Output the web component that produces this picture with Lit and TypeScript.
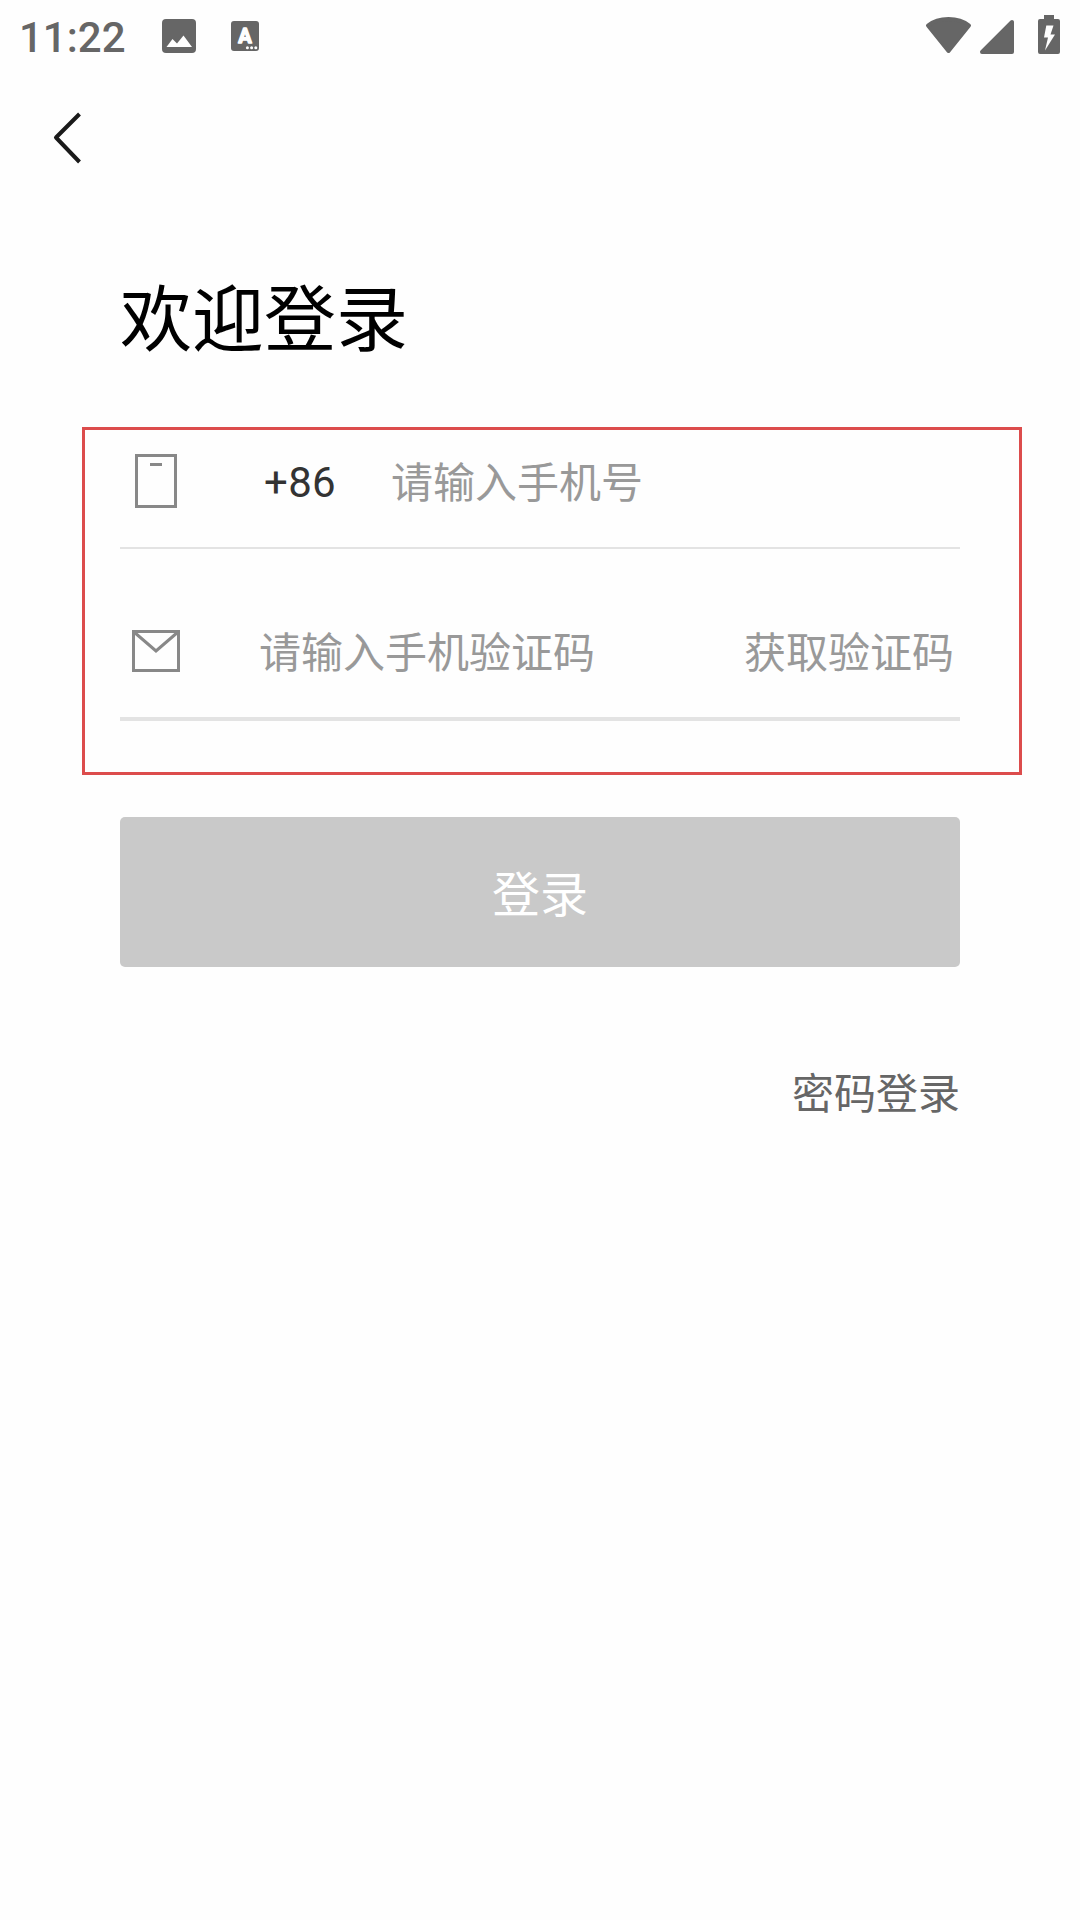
import { LitElement, html, css } from "lit";
import { customElement } from "lit/decorators.js";

@customElement("status-bar")
class StatusBar extends LitElement {
  static styles = css`
    :host {
      display: flex;
      justify-content: space-between;
      height: 72px;
      padding: 0 20px 0 19px;
      box-sizing: border-box;
      color: #666;
    }
    .side {
      display: flex;
      align-items: center;
      height: 72px;
    }
    .time {
      width: 143px;
      font: 500 42px/50px Roboto, sans-serif;
      padding-top: 4px;
    }
    .icon {
      display: block;
      fill: #666;
    }
    .letter {
      font: 700 20px Roboto, sans-serif;
      fill: #fefefe;
      stroke: #fefefe;
      stroke-width: 1.4px;
      stroke-linejoin: round;
    }
    .light {
      fill: #fefefe;
    }
    .round {
      stroke: #666;
      stroke-width: 4px;
      stroke-linejoin: round;
    }
  `;

  render() {
    return html`
      <div class="side">
        <span class="time">11:22</span>
        <svg class="icon" width="108" height="72" viewBox="162 0 108 72">
          <rect x="162" y="19" width="34" height="34" rx="4" />
          <path class="light" d="M166.5 47l6-8 4.500 4.500 6.500-8 8.500 11.500z" />
          <rect x="231" y="21" width="28" height="30" rx="3" />
          <text class="letter" x="245" y="42.500" text-anchor="middle">A</text>
          <circle class="light" cx="247.4" cy="47.7" r="1.5" />
          <circle class="light" cx="251.6" cy="47.7" r="1.5" />
          <circle class="light" cx="255.8" cy="47.7" r="1.5" />
        </svg>
      </div>
      <div class="side">
        <svg class="icon" width="136" height="72" viewBox="924 0 136 72">
          <path class="round" d="M928 25.5Q936 19 948.5 19T969 25.5L948.5 51z" />
          <path class="round" d="M982 52L1012 22V52z" />
          <path
            fill-rule="evenodd"
            d="M1044 15h10v4h4a2 2 0 0 1 2 2v31a2 2 0 0 1-2 2h-18a2 2 0 0 1-2-2v-31a2 2 0 0 1 2-2h4zM1046.3 25.5l-2.3 12h4l-3 13 10-16h-4.500l3-9z"
          />
        </svg>
      </div>
    `;
  }
}

@customElement("app-root")
class AppRoot extends LitElement {
  static styles = css`
    :host {
      display: block;
      width: 1080px;
      height: 1920px;
      overflow: hidden;
      background: #fefefe;
      font-family: "Noto Sans CJK SC", sans-serif;
      font-size: 42px;
      line-height: 60px;
    }
    .nav {
      height: 132px;
      padding: 38px 0 0 50px;
      box-sizing: border-box;
    }
    .icon {
      display: block;
      flex: none;
      fill: none;
      stroke: #888;
      stroke-width: 3px;
    }
    .back {
      stroke: #1a1a1a;
      stroke-width: 4px;
      stroke-linejoin: round;
    }
    .title {
      margin: 0;
      padding: 60px 0 0 120px;
      height: 223px;
      box-sizing: border-box;
      font-size: 72px;
      font-weight: 400;
      line-height: 100px;
      color: #000;
    }
    .form {
      width: 940px;
      height: 348px;
      margin-left: 82px;
      padding: 0 59px 0 35px;
      box-sizing: border-box;
      border: 3px solid #dc4c4c;
    }
    .row {
      display: flex;
      align-items: center;
      box-sizing: border-box;
      border-bottom: 2px solid #e3e3e3;
    }
    .phone {
      height: 119px;
      padding: 0 0 15px 12px;
    }
    .verify {
      height: 136px;
      margin-top: 36px;
      padding: 0 6px 0 12px;
      border-bottom-width: 4px;
    }
    .prefix {
      width: 127px;
      margin-left: 84px;
      padding-top: 4px;
      font-family: Roboto, sans-serif;
      color: #333;
      letter-spacing: 0.3px;
    }
    .input {
      flex: 1;
      min-width: 0;
      height: 60px;
      padding: 0 0 2px;
      box-sizing: border-box;
      border: 0;
      outline: 0;
      background: none;
      font: inherit;
      color: #333;
    }
    .input::placeholder {
      color: #999;
      opacity: 1;
    }
    .code {
      margin-left: 79px;
    }
    .send {
      padding-bottom: 2px;
      color: #999;
    }
    .login {
      display: block;
      width: 840px;
      height: 150px;
      margin: 42px 0 0 120px;
      padding: 0 0 3px;
      border: 0;
      border-radius: 5px;
      background: #c9c9c9;
      color: #fff;
      font: inherit;
      font-size: 48px;
    }
    .alt {
      padding: 94px 120px 0 0;
      text-align: right;
      color: #666;
    }
  `;

  render() {
    return html`
      <status-bar></status-bar>
      <div class="nav">
        <svg class="icon back" width="36" height="56" viewBox="50 110 36 56">
          <path d="M79.500 114L56 137.500L79.500 162" />
        </svg>
      </div>
      <h1 class="title">欢迎登录</h1>
      <div class="form">
        <div class="row phone">
          <svg class="icon" width="48" height="54" viewBox="0 0 48 54">
            <path d="M4.500 1.500h39v51h-39zM18 10.500h12" />
          </svg>
          <span class="prefix">+86</span>
          <input class="input" placeholder="请输入手机号" />
        </div>
        <div class="row verify">
          <svg class="icon" width="48" height="42" viewBox="0 0 48 42">
            <path d="M1.500 1.500h45v39h-45zM2 2L24 21L46 2" />
          </svg>
          <input class="input code" placeholder="请输入手机验证码" />
          <span class="send">获取验证码</span>
        </div>
      </div>
      <button class="login">登录</button>
      <div class="alt">密码登录</div>
    `;
  }
}
